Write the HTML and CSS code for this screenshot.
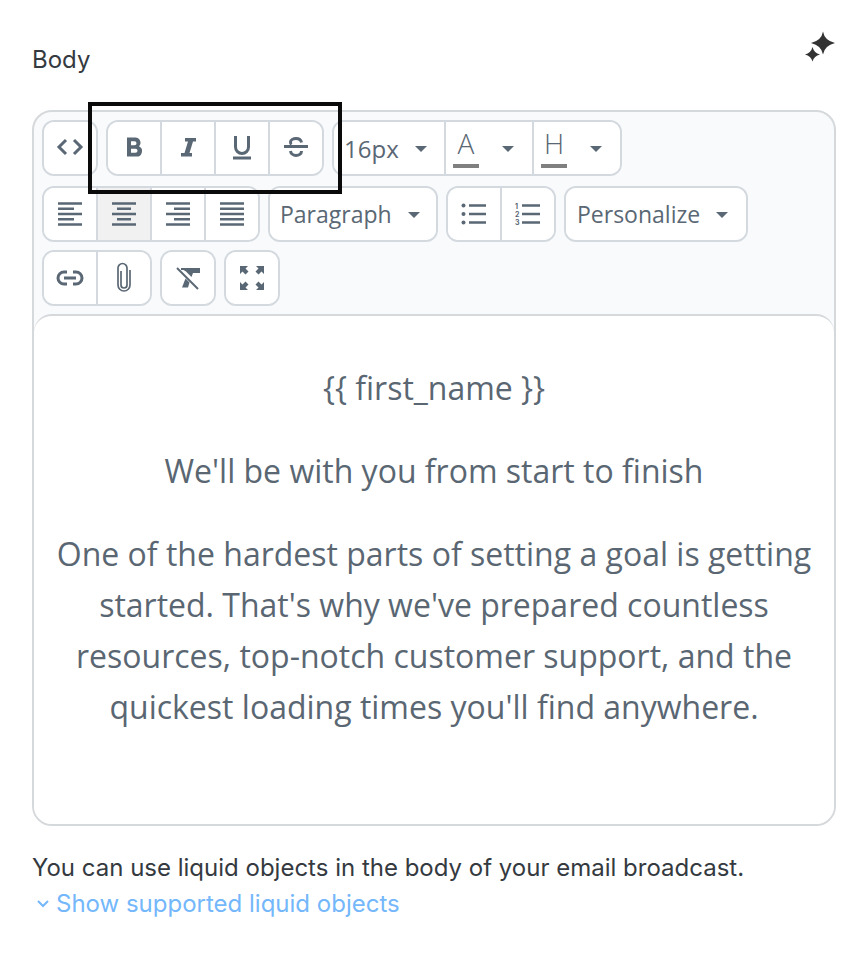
FILE: index.html
```html
<!DOCTYPE html>
<html lang="en">
<head>
  <meta charset="UTF-8" />
  <title>Body editor</title>
  <link rel="stylesheet" href="styles.css">
</head>
<body>

<div class="field">
  <div class="field-head">
    <label>Body</label>
    <svg class="sparkle" width="32" height="32" viewBox="0 0 32 32"><path d="M18 1.500Q19.500 10.500 30 13Q19.500 15.500 18 24.500Q16.500 15.500 6 13Q16.500 10.500 18 1.500Z" fill="#333"/><path d="M7 17.500Q8.500 23.500 14.500 25Q8.500 26.500 7 32Q5.500 26.500 -0.500 25Q5.500 23.500 7 17.500Z" fill="#333" transform="translate(0.500 -0.500)"/></svg>
  </div>

  <div class="editor">
    <div class="toolbar">
      <div class="row first">
        <div class="group">
          <button class="btn"><svg width="28" height="20" viewBox="0 0 28 20"><path d="M10 2l-7 7 7 7M18 2l7 7-7 7" class="line"/></svg></button>
        </div>
        <div class="group">
          <button class="btn"><svg width="20" height="24" viewBox="0 0 20 24"><path d="M3 1.500h8a5.200 5.200 0 0 1 4 8.800A5.400 5.400 0 0 1 12 20.500H3zM7 5.300v4H10.500a2 2 0 0 0 0-4zM7 12.800v4H11.500a2 2 0 0 0 0-4z" class="fill" fill-rule="evenodd"/></svg></button>
          <button class="btn"><svg width="20" height="24" viewBox="0 0 20 24"><path d="M7 2h11v3.500h-3l-3.500 11.500H14v3.500H3V17h3.500L10 5.500H7z" class="fill"/></svg></button>
          <button class="btn"><svg width="22" height="26" viewBox="0 0 22 26"><path d="M4.500 1v11a6.500 6.500 0 0 0 13 0V1" class="line"/><path d="M2 23h18" class="line"/></svg></button>
          <button class="btn"><svg width="26" height="26" viewBox="0 0 26 26"><path d="M1 11.500h24" class="line"/><path d="M18.500 7.500c-.5-2.500-2.800-4-5.500-4s-5.500 1.300-5.500 3.500c0 1 .3 2 1 2.500M7.500 16c.3 2.500 2.800 4.500 5.500 4.500s5.500-1.500 5.500-4.500" class="line"/></svg></button>
        </div>
        <div class="group">
          <button class="btn select size">16px<span class="caret"></span></button>
          <button class="btn color"><span class="swatch">A</span><span class="caret"></span></button>
          <button class="btn color"><span class="swatch">H</span><span class="caret"></span></button>
        </div>
      </div>

      <div class="row">
        <div class="group">
          <button class="btn"><svg width="26" height="26" viewBox="0 0 26 26"><path d="M1 2.500h24M1 7.800h16M1 13h24M1 18.200h16M1 23.500h24" class="bars"/></svg></button>
          <button class="btn active"><svg width="26" height="26" viewBox="0 0 26 26"><path d="M1 2.500h24M6 7.800h14M1 13h24M6 18.200h14M1 23.500h24" class="bars"/></svg></button>
          <button class="btn"><svg width="26" height="26" viewBox="0 0 26 26"><path d="M1 2.500h24M9 7.800h16M1 13h24M9 18.200h16M1 23.500h24" class="bars"/></svg></button>
          <button class="btn"><svg width="26" height="26" viewBox="0 0 26 26"><path d="M1 2.500h24M1 7.800h24M1 13h24M1 18.200h24M1 23.500h24" class="bars"/></svg></button>
        </div>
        <div class="group">
          <button class="btn select para">Paragraph<span class="caret"></span></button>
        </div>
        <div class="group">
          <button class="btn"><svg width="26" height="26" viewBox="0 0 26 26"><circle cx="2.500" cy="4.500" r="2" class="fill"/><circle cx="2.500" cy="13" r="2" class="fill"/><circle cx="2.500" cy="21.500" r="2" class="fill"/><path d="M8 4.500h17M8 13h17M8 21.500h17" class="bars"/></svg></button>
          <button class="btn"><svg width="26" height="26" viewBox="0 0 26 26"><text x="0" y="7.500" class="num">1</text><text x="0" y="15.500" class="num">2</text><text x="0" y="23.500" class="num">3</text><path d="M7 4.500h18M7 13h18M7 21.500h18" class="bars"/></svg></button>
        </div>
        <div class="group">
          <button class="btn select person">Personalize<span class="caret"></span></button>
        </div>
      </div>

      <div class="row">
        <div class="group">
          <button class="btn"><svg width="28" height="16" viewBox="0 0 28 16"><path d="M11 2H8a6 6 0 0 0 0 12h3M17 2h3a6 6 0 0 1 0 12h-3M8 8h12" class="line"/></svg></button>
          <button class="btn"><svg width="20" height="32" viewBox="0 0 20 32"><path d="M7 9v14a3 3 0 0 0 6 0V6a4.500 4.500 0 0 0-9 0v17a6 6 0 0 0 12 0V8" class="clip"/></svg></button>
        </div>
        <div class="group">
          <button class="btn"><svg width="26" height="26" viewBox="0 0 26 26"><path d="M6 3h19v5h-7l-1.500 4-5.500-5.500L8.500 5H6z" class="fill"/><path d="M10.500 13.500l4 4-1.500 5H7z" class="fill"/><path d="M2 3l21 21" class="thin"/></svg></button>
        </div>
        <div class="group">
          <button class="btn"><svg width="26" height="26" viewBox="0 0 26 26"><path d="M1 1h8L6.500 3.500l3 3-3 3-3-3L1 9zM25 1v8l-2.500-2.500-3 3-3-3 3-3L17 1zM1 25v-8l2.500 2.500 3-3 3 3-3 3L9 25zM25 25h-8l2.500-2.500-3-3 3-3 3 3L25 17z" class="fill"/></svg></button>
        </div>
      </div>
    </div>

    <div class="content">
      <p>{{ first_name }}</p>
      <p>We'll be with you from start to finish</p>
      <p>One of the hardest parts of setting a goal is getting started. That's why we've prepared countless resources, top-notch customer support, and the quickest loading times you'll find anywhere.</p>
    </div>
  </div>

  <p class="hint">You can use liquid objects in the body of your email broadcast.</p>
  <a class="toggle" href="#"><svg width="14" height="10" viewBox="0 0 14 10"><path d="M2 2l5 5 5-5" fill="none" stroke="#74b7fb" stroke-width="2"/></svg>Show supported liquid objects</a>
</div>

<div class="highlight"></div>

</body>
</html>
```

FILE: styles.css
```css
body {
  margin: 0;
  padding: 0;
  background: white;
  font-family: "Inter", "Liberation Sans", sans-serif;
}

.field {
  padding: 24px 32px 0 32px;
  width: 804px;
}

.field-head {
  display: flex;
  justify-content: space-between;
  align-items: center;
  height: 70px;
  margin-bottom: 16px;
}

.field-head label {
  font-size: 24px;
  color: #343a40;
  margin-top: 1px;
}

.sparkle {
  margin-right: -1px;
  margin-top: -26px;
}

.editor {
  border: 2px solid #d6d9dc;
  border-radius: 20px;
  background: #f9fafb;
  height: 712px;
  display: flex;
  flex-direction: column;
}

.toolbar {
  padding: 8px 8px 8px 8px;
  display: flex;
  flex-direction: column;
  gap: 8px;
}

.row {
  display: flex;
  gap: 8px;
}

.row.first {
  margin-bottom: 2px;
}

.group {
  display: flex;
  box-sizing: border-box;
  background: white;
  border: 2px solid #d3d9de;
  border-radius: 12px;
  overflow: hidden;
  height: 56px;
}

.btn {
  width: 54px;
  height: 52px;
  padding: 0;
  background: white;
  border: none;
  border-left: 2px solid #d3d9de;
  display: flex;
  align-items: center;
  justify-content: center;
  font-family: "Open Sans", "Noto Sans", sans-serif;
  font-size: 24px;
  color: #5a6774;
}

.btn:first-child {
  border-left: none;
  width: 52px;
}

.btn.active {
  background: #f1f1f1;
}

.select {
  justify-content: flex-start;
}

.btn.size {
  width: 110px;
  padding-left: 10px;
}

.btn.para {
  width: 166px;
  padding-left: 10px;
  font-size: 23px;
}

.btn.person {
  width: 180px;
  padding-left: 11px;
  font-size: 23px;
}

.btn.color {
  width: 88px;
  justify-content: flex-start;
  padding-left: 7px;
}

.swatch {
  width: 26px;
  height: 39px;
  line-height: 29px;
  text-align: center;
  border-bottom: 4px solid #808080;
  box-sizing: border-box;
  font-size: 28px;
  font-weight: 300;
}

.caret {
  width: 0;
  height: 0;
  border-left: 6px solid transparent;
  border-right: 6px solid transparent;
  border-top: 6px solid #5a6774;
  margin-left: 16px;
  margin-top: 2px;
}

.color .caret {
  margin-left: 23px;
}

.line {
  fill: none;
  stroke: #5a6774;
  stroke-width: 3;
}

.thin {
  fill: none;
  stroke: #5a6774;
  stroke-width: 2;
}

.clip {
  fill: none;
  stroke: #5a6774;
  stroke-width: 1.700;
}

.bars {
  fill: none;
  stroke: #5a6774;
  stroke-width: 2.500;
}

.fill {
  fill: #5a6774;
}

.num {
  font-family: "Inter", sans-serif;
  font-size: 7px;
  font-weight: 700;
  fill: #5a6774;
}

.content {
  flex: 1;
  background: white;
  border-top: 2px solid #d6d9dc;
  border-radius: 18px;
  padding: 46px 20px 0 20px;
  text-align: center;
  font-family: "Open Sans", "Noto Sans", sans-serif;
  font-size: 32px;
  line-height: 51px;
  color: #5a6773;
}

.content p {
  margin: 0 0 32px 0;
}

.hint {
  margin: 24px 0 0 0;
  font-size: 24px;
  line-height: 36px;
  color: #343a40;
}

.toggle {
  display: flex;
  align-items: center;
  gap: 6px;
  padding-left: 4px;
  font-size: 24px;
  line-height: 36px;
  color: #74b7fb;
  text-decoration: none;
}

.highlight {
  position: absolute;
  left: 88px;
  top: 102px;
  width: 246px;
  height: 84px;
  border: 4px solid #0a0a0a;
}
```
